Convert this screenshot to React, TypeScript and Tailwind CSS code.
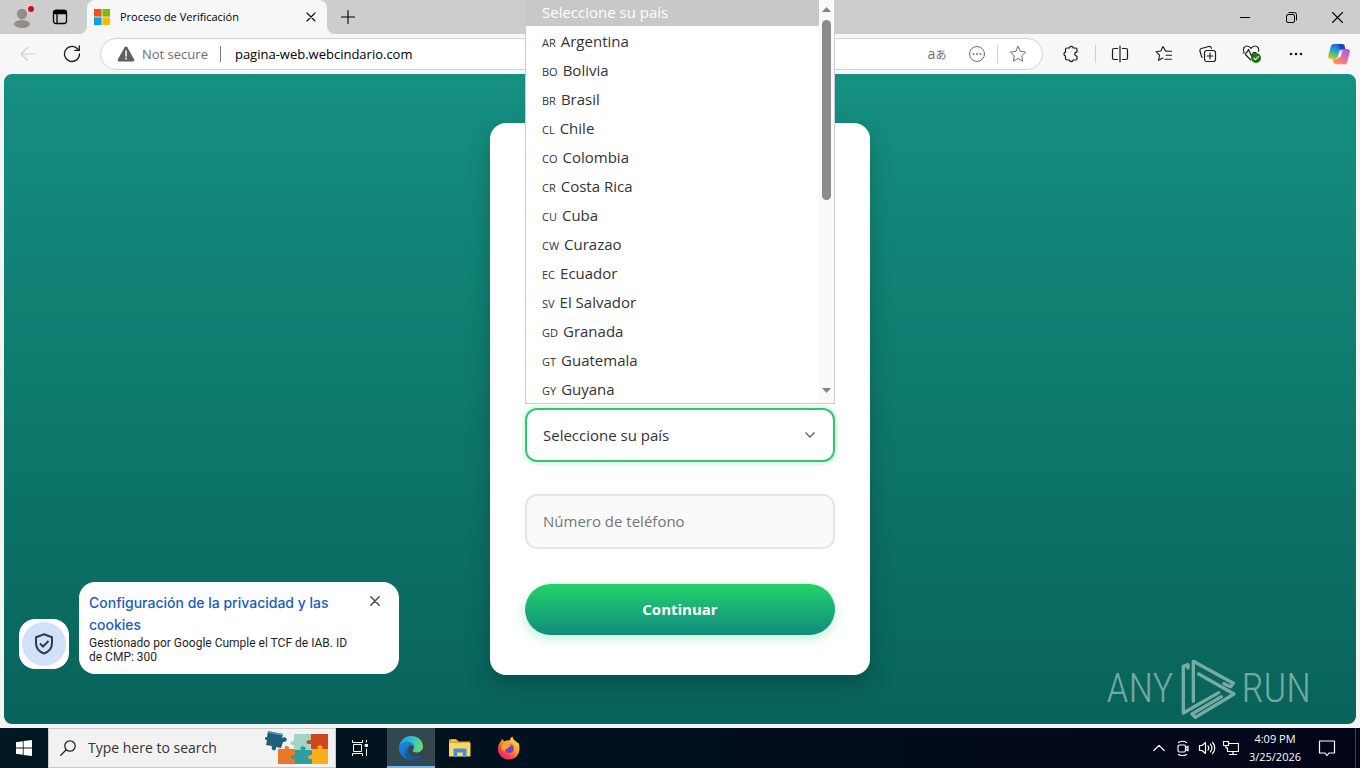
import type { ReactNode } from 'react';

const countries: [string, string][] = [
  ['AR', 'Argentina'],
  ['BO', 'Bolivia'],
  ['BR', 'Brasil'],
  ['CL', 'Chile'],
  ['CO', 'Colombia'],
  ['CR', 'Costa Rica'],
  ['CU', 'Cuba'],
  ['CW', 'Curazao'],
  ['EC', 'Ecuador'],
  ['SV', 'El Salvador'],
  ['GD', 'Granada'],
  ['GT', 'Guatemala'],
  ['GY', 'Guyana'],
];

function IconButton({ label, className, children }: { label: string; className: string; children: ReactNode }) {
  return (
    <button type="button" aria-label={label} className={`flex shrink-0 items-center justify-center ${className}`}>
      {children}
    </button>
  );
}

function Line({ size = 20, width = 1, className = '', children }: { size?: number; width?: number; className?: string; children: ReactNode }) {
  return (
    <svg
      width={size}
      height={size}
      viewBox={`0 0 ${size} ${size}`}
      fill="none"
      stroke="currentColor"
      strokeWidth={width}
      strokeLinecap="round"
      strokeLinejoin="round"
      className={`shrink-0 ${className}`}
      aria-hidden="true"
    >
      {children}
    </svg>
  );
}

function TabStrip() {
  return (
    <header className="flex h-[34px] items-stretch bg-[#cdcdcd] text-black">
      <IconButton label="Profile" className="w-11">
        <svg width="24" height="24" viewBox="0 0 24 24" aria-hidden="true">
          <circle cx="12" cy="9" r="5.2" fill="#938e8a" />
          <ellipse cx="12" cy="19" rx="8" ry="4" fill="#938e8a" />
          <circle cx="21" cy="4" r="4" fill="#e6d3d4" />
          <circle cx="21" cy="4" r="3" fill="#c50f1f" />
        </svg>
      </IconButton>
      <IconButton label="Tab actions" className="mr-[11px] w-8">
        <Line size={16} width={1.3}>
          <rect x="1.5" y="1.5" width="13" height="13" rx="2.5" />
          <path d="M1.5 3.8a2.3 2.3 0 0 1 2.3-2.3h8.4a2.3 2.3 0 0 1 2.3 2.3V4.500h-13z" fill="currentColor" />
          <path d="M5 5v9.5" />
        </Line>
      </IconButton>
      <div className="relative flex w-60 items-center gap-2.5 rounded-t-lg bg-[#f7f7f7] pl-[7px] pr-2.5">
        <svg width="8" height="8" viewBox="0 0 8 8" className="absolute -left-2 bottom-0" aria-hidden="true">
          <path d="M8 0v8H0a8 8 0 0 0 8-8z" fill="#f7f7f7" />
        </svg>
        <svg width="8" height="8" viewBox="0 0 8 8" className="absolute -right-2 bottom-0" aria-hidden="true">
          <path d="M0 0v8h8a8 8 0 0 1-8-8z" fill="#f7f7f7" />
        </svg>
        <svg width="16" height="16" viewBox="0 0 16 16" aria-hidden="true">
          <path d="M0 0h7.6v7.6H0z" fill="#f25022" />
          <path d="M8.4 0H16v7.6H8.4z" fill="#7fba00" />
          <path d="M0 8.4h7.6V16H0z" fill="#00a4ef" />
          <path d="M8.4 8.4H16V16H8.4z" fill="#ffb900" />
        </svg>
        <span className="flex-1 truncate text-[11px]">Proceso de Verificación</span>
        <IconButton label="Close tab" className="h-3 w-3">
          <Line size={10} width={1.1}>
            <path d="M1 1l8 8M9 1l-8 8" />
          </Line>
        </IconButton>
      </div>
      <IconButton label="New tab" className="w-[42px]">
        <Line size={14} width={1.1}>
          <path d="M7 .5v13M.5 7h13" />
        </Line>
      </IconButton>
      <div className="flex-1" />
      <IconButton label="Minimize" className="w-[46px]">
        <Line size={10}>
          <path d="M0 5.5h10" />
        </Line>
      </IconButton>
      <IconButton label="Restore" className="w-[46px]">
        <Line size={11}>
          <rect x=".5" y="2.5" width="8" height="8" rx="1.5" />
          <path d="M3 .6h5.5a2 2 0 0 1 2 2V8" />
        </Line>
      </IconButton>
      <IconButton label="Close" className="w-[46px]">
        <Line size={11} width={1.1}>
          <path d="M.5.5l10 10M10.5.5l-10 10" />
        </Line>
      </IconButton>
    </header>
  );
}

function Copilot() {
  return (
    <svg width="24" height="24" viewBox="0 0 24 24" aria-hidden="true">
      <defs>
        <linearGradient id="cpA" x1="0.6" y1="0" x2="0.2" y2="1">
          <stop offset="0" stopColor="#1b55dd" />
          <stop offset=".4" stopColor="#1c9fe0" />
          <stop offset=".7" stopColor="#5fbf6a" />
          <stop offset="1" stopColor="#f0c52a" />
        </linearGradient>
        <linearGradient id="cpB" x1="0.8" y1="0" x2="0.2" y2="1">
          <stop offset="0" stopColor="#a35be8" />
          <stop offset=".5" stopColor="#ee6a9c" />
          <stop offset="1" stopColor="#fb9b4b" />
        </linearGradient>
      </defs>
      <path d="M7 2h8c1.500 0 2.200 1 2.600 2.200L18.300 7h-3c-1.500 0-2.300.7-2.800 2.300L10.500 15c-.6 1.600-1.500 2.200-3.200 2.200H4C1.500 17.200.7 15.500 1.300 13.500L3.700 4.800C4.200 3 5.300 2 7 2z" fill="url(#cpA)" />
      <path d="M17 22.300H9c-1.500 0-2.200-1-2.600-2.200l-.7-2.900h3c1.500 0 2.300-.7 2.800-2.300l1.900-5.700c.6-1.600 1.500-2.200 3.200-2.200H20c2.500 0 3.300 1.700 2.700 3.700l-2.400 8.700c-.5 1.900-1.600 2.900-3.300 2.900z" fill="url(#cpB)" />
      <path d="M11.500 2H15c1.500 0 2.200 1 2.600 2.200L18.300 7h-3c-1 0-1.700.4-2.200 1.200z" fill="#1746bd" />
      <path d="M11 15.500l2.400-6.700h2.200l-2.300 6.700z" fill="#fff" opacity=".85" />
    </svg>
  );
}

function Toolbar() {
  return (
    <nav aria-label="Browser toolbar" className="flex h-10 items-center bg-[#f7f7f7] pl-1.5 text-[#1b1b1b]">
      <IconButton label="Back" className="h-8 w-11 text-[#cfcfcf]">
        <Line size={16} width={1.2}>
          <path d="M15 8H1M7.500 1.500L1 8l6.500 6.500" />
        </Line>
      </IconButton>
      <IconButton label="Refresh" className="h-8 w-11">
        <Line size={18} width={1.3}>
          <path d="M16.500 9a7.500 7.500 0 1 1-2.600-5.700L16 5.200" />
          <path d="M16.300 1v4.400h-4.400" />
        </Line>
      </IconButton>
      <form className="ml-1.5 flex h-8 flex-1 items-center rounded-full border border-[#d8d3d3] bg-white pl-4 pr-1 text-sm text-[#6e6e6e]">
        <svg width="18" height="16" viewBox="0 0 18 16" aria-hidden="true">
          <path d="M9 .5c.6 0 1 .3 1.300.8l6.900 12.300c.5 1-.1 1.900-1.200 1.900H2c-1.100 0-1.700-.9-1.200-1.900L7.700 1.300C8 .8 8.400.5 9 .5z" fill="#5f5f5f" />
          <path d="M9 5v5" stroke="#fff" strokeWidth="1.500" strokeLinecap="round" />
          <circle cx="9" cy="12.600" r="1" fill="#fff" />
        </svg>
        <span className="ml-[7px] text-[13px]">Not secure</span>
        <span className="ml-3 h-4 w-px bg-[#777]" />
        <input
          aria-label="Address"
          readOnly
          value="pagina-web.webcindario.com"
          className="ml-3.5 min-w-0 flex-1 bg-transparent text-[13px] text-black outline-none"
        />
        <IconButton label="Translate" className="h-7 w-10 font-['Open_Sans','Noto_Sans_CJK_JP',sans-serif] text-[11px]">
          <span className="text-sm leading-none">a</span>
          <span className="leading-none">あ</span>
        </IconButton>
        <IconButton label="More information" className="h-7 w-10">
          <Line size={18}>
            <circle cx="9" cy="9" r="7.500" />
            <path d="M5.500 9h.01M9 9h.01M12.500 9h.01" strokeWidth="1.800" />
          </Line>
        </IconButton>
        <span className="h-[18px] w-px bg-[#d0d0d0]" />
        <IconButton label="Add to favorites" className="h-7 w-10">
          <Line size={18}>
            <path d="M9 1.500l2.300 4.900 5.300.7-3.900 3.700 1 5.300L9 13.500l-4.700 2.600 1-5.300-3.900-3.700 5.300-.7z" />
          </Line>
        </IconButton>
      </form>
      <div className="flex items-center pl-1.5">
        <IconButton label="Extensions" className="h-8 w-11">
          <Line size={18} width={1.200}>
            <path d="M5 3h2.300a2 2 0 0 1 3.900 0h2.300A1.500 1.500 0 0 1 15 4.500v2.600h-.7a2 2 0 0 0 0 3.900h.7V13.500a1.500 1.500 0 0 1-1.500 1.500h-2.300a2 2 0 0 1-3.900 0H5a1.500 1.500 0 0 1-1.500-1.500V11a2 2 0 0 1 0-3.900V4.500A1.500 1.500 0 0 1 5 3z" />
          </Line>
        </IconButton>
        <span className="mx-0.5 h-[18px] w-px bg-[#d0d0d0]" />
        <IconButton label="Split screen" className="h-8 w-11">
          <Line size={18} width={1.200}>
            <path d="M6.500 3.500H3A1.500 1.500 0 0 0 1.500 5v8A1.500 1.500 0 0 0 3 14.500h3.500M11.500 3.500H15A1.500 1.500 0 0 1 16.500 5v8a1.500 1.500 0 0 1-1.500 1.500h-3.500M9 1v16" />
          </Line>
        </IconButton>
        <IconButton label="Favorites" className="h-8 w-11">
          <Line size={18} width={1.100}>
            <path d="M10.200 5.500L8 1.500 5.800 6 1 6.700l3.500 3.400-.9 5.200L8 13M10.200 5.500l1 .8h5.300M11 10.300h5.500M10 14.200h6.500" />
          </Line>
        </IconButton>
        <IconButton label="Collections" className="h-8 w-11">
          <Line size={18} width={1.200}>
            <rect x="5.500" y="5.500" width="11" height="11" rx="2.200" />
            <path d="M11 8.200v5.600M8.200 11h5.600M3.200 12.300a3 3 0 0 1-.9-1.500L1 6a2 2 0 0 1 1.400-2.500l7.400-2a2 2 0 0 1 2.400 1.300l.2.500" />
          </Line>
        </IconButton>
        <IconButton label="Browser essentials" className="h-8 w-11">
          <Line size={20} width={1.200}>
            <path d="M1.800 7.500C.6 4.500 2.500 2 5 2c1.700 0 3 1 4 2.300C10 3 11.300 2 13 2c2.700 0 4.400 2.500 3.500 5.200M3.500 10.500L8.500 15.800" />
            <path d="M1 9h3.500l2-3.500 3 6.500 2-3.500H14" />
            <circle cx="14" cy="14" r="5" fill="#107c10" stroke="none" />
            <path d="M11.800 14.100l1.600 1.600 2.900-3" stroke="#fff" />
          </Line>
        </IconButton>
        <IconButton label="Settings and more" className="h-8 w-11">
          <svg width="16" height="4" viewBox="0 0 16 4" fill="currentColor" aria-hidden="true">
            <circle cx="3" cy="2" r="1.300" />
            <circle cx="8" cy="2" r="1.300" />
            <circle cx="13" cy="2" r="1.300" />
          </svg>
        </IconButton>
        <IconButton label="Copilot" className="h-8 w-[42px]">
          <Copilot />
        </IconButton>
      </div>
    </nav>
  );
}

function CountryList() {
  return (
    <div className="absolute bottom-[58px] left-0 z-20 flex h-[404px] w-full border-x border-b border-[#c9ccd6] bg-white">
      <ul role="listbox" aria-label="Países" className="flex-1 overflow-hidden">
        <li role="option" aria-selected="true" className="flex h-[26px] items-center bg-[#c8c8c8] pb-0.5 pl-4 text-white">
          Seleccione su país
        </li>
        {countries.map(([code, name]) => (
          <li key={code} role="option" aria-selected="false" className="flex h-[29px] items-baseline gap-[5px] pl-4 leading-[30px]">
            <span className="text-[11px] font-medium">{code}</span>
            <span>{name}</span>
          </li>
        ))}
      </ul>
      <div className="flex w-[15px] flex-col items-center justify-between bg-[#fafafa] pt-[7px] pb-2.5">
        <div className="flex flex-col items-center gap-2">
          <svg width="9" height="5" viewBox="0 0 9 5" aria-hidden="true">
            <path d="M4.500 0L9 5H0z" fill="#858585" />
          </svg>
          <span className="h-[180px] w-[9px] rounded-full bg-[#8b8b8b]" />
        </div>
        <svg width="9" height="5" viewBox="0 0 9 5" aria-hidden="true">
          <path d="M4.500 5L9 0H0z" fill="#858585" />
        </svg>
      </div>
    </div>
  );
}

function VerificationCard() {
  return (
    <form className="flex min-h-[552px] w-[380px] flex-col justify-end rounded-2xl bg-white px-[35px] pb-10 text-[15px] text-[#333] shadow-[0_10px_25px_rgba(0,0,0,0.22)]">
      <div className="relative mb-8">
        <select
          aria-label="País"
          className="h-[54px] w-full appearance-none rounded-xl border-2 border-[#32c671] bg-white px-4 shadow-[0_0_0_3px_rgba(37,211,102,0.12)] outline-none"
        >
          <option>Seleccione su país</option>
          {countries.map(([code, name]) => (
            <option key={code}>{name}</option>
          ))}
        </select>
        <svg
          width="10"
          height="6"
          viewBox="0 0 10 6"
          fill="none"
          stroke="#6b6b6b"
          strokeWidth="1.500"
          className="pointer-events-none absolute right-5 top-6"
          aria-hidden="true"
        >
          <path d="M.5.5L5 5l4.500-4.500" />
        </svg>
        <CountryList />
      </div>
      <input
        type="tel"
        aria-label="Número de teléfono"
        placeholder="Número de teléfono"
        className="mb-[35px] h-[55px] w-full rounded-xl border-2 border-[#e5e5e5] bg-[#fafafa] px-4 pb-0.5 outline-none placeholder:text-[#757575]"
      />
      <button
        type="button"
        className="h-[51px] w-full rounded-full bg-linear-to-b from-[#25d366] to-[#128c7e] font-bold text-white shadow-[0_4px_12px_rgba(37,211,102,0.3)]"
      >
        Continuar
      </button>
    </form>
  );
}

function PrivacyNotice() {
  return (
    <aside className="absolute bottom-[50px] left-[15px] flex items-end gap-2.5">
      <button type="button" aria-label="Privacidad" className="mb-[5px] flex h-[50px] w-[50px] items-center justify-center rounded-2xl bg-white">
        <span className="flex h-11 w-11 items-center justify-center rounded-full bg-[#d3e1f8]">
          <svg width="20" height="22" viewBox="0 0 20 22" fill="none" stroke="#2f3b4d" strokeWidth="2" aria-hidden="true">
            <path d="M10 1.300l8 3V10c0 5-3.300 8.800-8 10.500C5.300 18.800 2 15 2 10V4.300z" />
            <path d="M6 10.500l3 3 5.500-5.500" />
          </svg>
        </span>
      </button>
      <div className="flex w-80 items-start justify-between rounded-2xl bg-white p-2.5">
        <div className="w-[270px]">
          <a href="#privacidad" className="block font-['Inter',sans-serif] text-sm leading-[22px] font-medium text-[#1a5bc4]">
            Configuración de la privacidad y las cookies
          </a>
          <p className="font-['Roboto',sans-serif] text-xs leading-[14px] text-[#1f1f1f]">
            Gestionado por Google Cumple el TCF de IAB. ID de CMP: 300
          </p>
        </div>
        <IconButton label="Cerrar" className="mt-[3px] mr-2 h-3 w-3 text-[#444]">
          <Line size={10} width={1.400}>
            <path d="M.8.8l8.400 8.400M9.200.8L.8 9.200" />
          </Line>
        </IconButton>
      </div>
    </aside>
  );
}

function Watermark() {
  return (
    <div className="absolute right-[45px] bottom-1 flex items-center gap-1.5 font-['Roboto_Condensed','Liberation_Sans_Narrow','Open_Sans_Condensed',sans-serif] text-[40px] leading-none font-light text-white/45">
      <span>ANY</span>
      <svg width="56" height="62" viewBox="0 0 168 186" fill="none" stroke="currentColor" strokeWidth="10" strokeLinejoin="round" strokeLinecap="round" aria-hidden="true">
        <path d="M24 30V20L10 25v140L116 104M40 130V10l120 66-8 10-20-9M56 48l106 60L46 178l-10-10 88-52" />
      </svg>
      <span>RUN</span>
    </div>
  );
}

function PuzzleArt() {
  return (
    <svg width="64" height="36" viewBox="0 0 64 36" aria-hidden="true">
      <path d="M29 4h17v7c4-2 6 4 0 4v5h-6c2 4-6 4-4 0h-7v-5c-4 1-5-5 0-4z" fill="#a3d5c5" />
      <path d="M46 4h17v15h-5c2 4-7 4-5 0h-7v-5c-6 1-6-5 0-4z" fill="#d2461f" />
      <path d="M13 19h7c-2-4 5-4 4 0h6v5c5-2 5 5 0 4v6H13z" fill="#e9782a" />
      <path d="M30 20h6c-3-5 7-5 4 0h7v4c4-2 4 5 0 4v6H30v-5c-5 1-5-5 0-4z" fill="#2d9d9d" />
      <path d="M47 19h6c-3-5 7-5 4 0h6v15H47v-5c-5 1-5-5 0-4z" fill="#f5b01c" />
      <path d="M3 1l15 3-1 4c5-3 7 4 1 4l-2 6-5-1c1 5-6 4-4-1l-6-1 1-5c-3 0-3-3 0-3z" fill="#1d617f" />
      <path d="M3 1l15 3-.5 1.500L2.700 2.500z" fill="#5da0b4" />
    </svg>
  );
}

function EdgeLogo() {
  return (
    <svg width="26" height="26" viewBox="0 0 26 26" aria-hidden="true">
      <defs>
        <linearGradient id="edTop" x1="0" y1="0.300" x2="1" y2="0.500">
          <stop offset="0" stopColor="#1b9de2" />
          <stop offset=".5" stopColor="#2fbfcc" />
          <stop offset="1" stopColor="#6bdc6c" />
        </linearGradient>
        <linearGradient id="edLow" x1="0" y1="0" x2="1" y2="1">
          <stop offset="0" stopColor="#1b8fe0" />
          <stop offset="1" stopColor="#1050ae" />
        </linearGradient>
      </defs>
      <path d="M1 12C2 5.500 7 1 13 1c7 0 12 4.800 12 10.500 0 3.600-2.900 6-6.300 6-2.600 0-4-.8-4-1.700 0-.9 1.300-1.400 1.300-3.500 0-2.500-3-4.800-7-4.800-3.500 0-6.500 1.500-8 4.500z" fill="url(#edTop)" />
      <path d="M1 13c.3-3.500 3.500-6.500 8-6.500 4 0 7 2.600 7 5.800-.8-1.200-2-1.800-3.200-1.600-2.500.4-4 3.200-3.200 6 .9 3.500 4.500 5.500 8.600 5.300 1.600 0 3.200-.4 4.300-1 .6-.3 1 .1.600.7C20.700 24 17.200 25 14 25 6.500 25 .7 19.800 1 13z" fill="url(#edLow)" />
      <path d="M9.500 13c-2.500 6 2 10.500 8.700 10.200 1.300-.1 2.500-.4 3.300-.7-2.500 2-5 2.500-7.500 2.500-6-1-9-7-4.500-12z" fill="#114a8b" opacity=".6" />
    </svg>
  );
}

function FolderIcon() {
  return (
    <svg width="24" height="20" viewBox="0 0 24 20" aria-hidden="true">
      <path d="M1 1.500h8l1.500 2H22V18H1z" fill="#e8a92c" />
      <path d="M1 5h21.500v13.500H1z" fill="#fbd769" />
      <path d="M3 1.500h5v1H3z" fill="#fff3c4" />
      <path d="M5.500 19v-7.500a1 1 0 0 1 1-1h11a1 1 0 0 1 1 1V19h-3.700v-4.500H9.200V19z" fill="#3f8fd6" />
    </svg>
  );
}

function FirefoxLogo() {
  return (
    <svg width="24" height="24" viewBox="0 0 24 24" aria-hidden="true">
      <defs>
        <linearGradient id="ffOut" x1="0.850" y1="0.100" x2="0.200" y2="0.950">
          <stop offset="0" stopColor="#ffe24a" />
          <stop offset=".4" stopColor="#ff9a2b" />
          <stop offset=".7" stopColor="#ff4b4b" />
          <stop offset="1" stopColor="#e8226d" />
        </linearGradient>
      </defs>
      <path d="M4 5l1-2c.7 1 1.500 1.700 2.500 2.200C9 4.500 11 4 13 4.300 13 2.800 14 1.300 15.500.500c.2 2.500 2 3.500 3.500 5 1 .7 1.500 1 2 2l.5-1c2.500 7 .5 17-9.500 17C5.500 23.500 1 18.800 1 13c0-3 1-6 3-8z" fill="url(#ffOut)" />
      <circle cx="12.300" cy="12.500" r="4.600" fill="#7a3fd0" />
      <path d="M5 9c2-2.500 4.500-2.500 6.500-1l3 .7c-.5 1.500-2.500 1.500-3 2.300-.4.800-.2 2-2.500 2-1 0-1.500 1-.5 2.300C6 15.500 3.500 12 5 9z" fill="#ffa52c" />
    </svg>
  );
}

function Taskbar() {
  return (
    <footer className="flex h-10 items-stretch bg-linear-to-r from-[#011822] to-[#020618] text-white">
      <IconButton label="Start" className="w-12">
        <svg width="16" height="16" viewBox="0 0 16 16" fill="#fff" aria-hidden="true">
          <path d="M0 2.200l6.800-1v6.400H0zM7.600 1.100L16 0v7.600H7.600zM0 8.400h6.800v6.400l-6.800-1zM7.600 8.400H16V16l-8.400-1.100z" />
        </svg>
      </IconButton>
      <label className="flex w-72 items-center border border-[#c9c9c9] bg-[#f2f2f2] pl-[11px] pr-1.5 text-[#222]">
        <Line size={16} width={1.300}>
          <circle cx="10" cy="6" r="5.200" />
          <path d="M6.200 9.800L.8 15.200" />
        </Line>
        <input
          aria-label="Search"
          placeholder="Type here to search"
          className="ml-3 min-w-0 flex-1 bg-transparent text-sm text-black outline-none placeholder:text-[#333]"
        />
        <PuzzleArt />
      </label>
      <IconButton label="Task view" className="w-[51px] pr-1">
        <Line size={18}>
          <path d="M1.500 1v2.500h10V1M1.500 17v-2.500h10V17M2.500 5.500h8v7h-8zM15.500 1v2.500M15.500 9.500V17" strokeLinecap="butt" />
          <rect x="14.500" y="5.500" width="2" height="2" fill="currentColor" />
        </Line>
      </IconButton>
      <IconButton label="Microsoft Edge" className="w-12 border-b-2 border-[#76b9ed] bg-[#33474f] pt-0.5">
        <EdgeLogo />
      </IconButton>
      <IconButton label="File Explorer" className="w-[49px]">
        <FolderIcon />
      </IconButton>
      <IconButton label="Firefox" className="w-[50px]">
        <FirefoxLogo />
      </IconButton>
      <div className="flex-1" />
      <IconButton label="Show hidden icons" className="w-6">
        <Line size={12} width={1.200}>
          <path d="M.8 8.500L6 3.300l5.200 5.200" />
        </Line>
      </IconButton>
      <IconButton label="Meet now" className="w-6">
        <Line size={16} width={1.200}>
          <rect x="3" y="5" width="7.500" height="7" rx="1.500" />
          <path d="M10.500 8l2.500-1.800v4.600L10.500 9M3.500 2.500C5.500.8 9.500.8 11.500 2.500M3.500 14.500c2 1.600 6 1.600 8 0" />
        </Line>
      </IconButton>
      <IconButton label="Volume" className="w-6">
        <Line size={18} width={1.200}>
          <path d="M1.500 6.500H4l3.500-3v11L4 11.500H1.500zM10 7c1 1.200 1 2.800 0 4M12.300 5.200c1.900 2.200 1.900 5.400 0 7.600M14.600 3.500c2.900 3.200 2.900 7.800 0 11" />
        </Line>
      </IconButton>
      <IconButton label="Network" className="w-6">
        <Line size={16} width={1.200}>
          <path d="M6 3.500h9.500v8H4.500V8M10 11.500v3M6.500 14.500h7M.5 1.500h5v4h-5zM3 5.500V8h1.500" />
        </Line>
      </IconButton>
      <div className="flex w-16 flex-col items-center justify-center text-[11px] leading-[18px]">
        <span>4:09 PM</span>
        <span>3/25/2026</span>
      </div>
      <IconButton label="Notifications" className="w-10">
        <Line size={18} width={1.200}>
          <path d="M1.500 2h15v12H11l-2 2.500L7 14H1.500z" />
        </Line>
      </IconButton>
      <span className="ml-2 mr-1 w-px bg-[#3b424c]" />
    </footer>
  );
}

export default function App() {
  return (
    <div className="flex min-h-screen flex-col bg-[#f3f5f5] font-['Open_Sans','Noto_Sans',sans-serif]">
      <TabStrip />
      <Toolbar />
      <main className="relative mx-1 mb-1 flex flex-1 items-center justify-center rounded-lg bg-linear-to-b from-[#159081] to-[#08635a]">
        <VerificationCard />
        <PrivacyNotice />
        <Watermark />
      </main>
      <Taskbar />
    </div>
  );
}
